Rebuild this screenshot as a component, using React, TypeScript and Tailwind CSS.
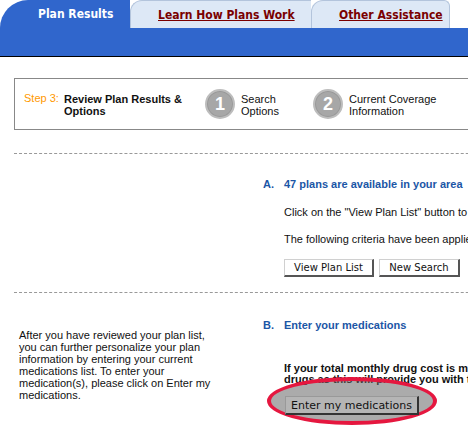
import React from "react";

const tabFont = "font-['DejaVu_Sans_Condensed','DejaVu_Sans',sans-serif] font-bold text-[12px]";
const btnFont = "font-['DejaVu_Sans',sans-serif] text-[10px]";

const StepCircle = ({ n }: { n: string }) => (
  <div className="w-[30px] h-[30px] rounded-full bg-[#a7a7a7] border-2 border-[#bdbdbd] shadow-[inset_0_0_0_1px_#999] flex items-center justify-center text-white font-bold text-[18px] leading-none">
    {n}
  </div>
);

const MacButton = ({ label, className = "" }: { label: string; className?: string }) => (
  <button
    className={`h-[18px] px-[8px] border-t border-l border-[#d0d0d0] border-r-2 border-b-2 border-r-[#555] border-b-[#555] text-[#111] leading-none ${btnFont} ${className}`}
  >
    {label}
  </button>
);

const App = () => {
  return (
    <div className="relative w-[468px] h-[428px] overflow-hidden bg-white text-[#111] text-[11px] font-['Liberation_Sans',Arial,sans-serif]">
      {/* Tabs */}
      <div className="flex h-[28px] items-end">
        <div className={`w-[130px] h-[28px] bg-[#3066cc] rounded-tl-[30px] text-white flex items-center pl-[38px] ${tabFont}`}>
          Plan Results
        </div>
        <div className={`w-[181px] h-[28px] bg-[#dde8f6] border-l border-t border-[#b3c4dc] rounded-tl-[12px] flex items-center pl-[27px] ${tabFont}`}>
          <a className="text-[#7a0000] underline">Learn How Plans Work</a>
        </div>
        <div className={`w-[139px] h-[28px] bg-[#dde8f6] border-l border-t border-r border-[#b3c4dc] rounded-tl-[12px] rounded-tr-[6px] flex items-center pl-[27px] ${tabFont}`}>
          <a className="text-[#7a0000] underline">Other Assistance</a>
        </div>
      </div>
      <div className="h-[29px] bg-[#3066cc] border-b border-black" />

      {/* Step box */}
      <div className="ml-[14px] mt-[21px] w-[520px] h-[52px] border border-[#888] flex items-start pl-[9px]">
        <span className="text-[#ff9900] mt-[11px] w-[40px] shrink-0">Step 3:</span>
        <div className="font-bold leading-[12px] mt-[14px] w-[141px] shrink-0">
          Review Plan Results &amp;
          <br />
          Options
        </div>
        <div className="mt-[10px] shrink-0">
          <StepCircle n="1" />
        </div>
        <div className="leading-[12px] mt-[14px] ml-[6px] w-[72px] shrink-0">
          Search
          <br />
          Options
        </div>
        <div className="mt-[10px] shrink-0">
          <StepCircle n="2" />
        </div>
        <div className="leading-[12px] mt-[14px] ml-[6px]">
          Current Coverage
          <br />
          Information
        </div>
      </div>

      {/* Section A */}
      <div className="ml-[14px] mt-[23px] w-[520px] border-t border-dashed border-[#999]" />
      <div className="flex ml-[14px] w-[700px]">
        <div className="w-[249px] shrink-0" />
        <div className="w-[420px] shrink-0 pt-[24px] whitespace-nowrap">
          <div className="flex font-bold text-[#1b56a6] leading-[13px]">
            <span className="w-[21px]">A.</span>
            <span>47 plans are available in your area</span>
          </div>
          <div className="pl-[21px]">
            <p className="mt-[15px] leading-[13px]">Click on the "View Plan List" button to view the plans available in your area.</p>
            <p className="mt-[14px] leading-[13px]">The following criteria have been applied to your plan search:</p>
            <div className="flex gap-[5px] mt-[13px]">
              <MacButton label="View Plan List" className="w-[90px]" />
              <MacButton label="New Search" className="w-[81px]" />
            </div>
          </div>
        </div>
      </div>

      {/* Section B */}
      <div className="ml-[14px] mt-[15px] w-[520px] border-t border-dashed border-[#999]" />
      <div className="flex ml-[14px] w-[700px]">
        <div className="w-[249px] shrink-0 pl-[5px] pt-[36px] leading-[12px] whitespace-nowrap">
          After you have reviewed your plan list,
          <br />
          you can further personalize your plan
          <br />
          information by entering your current
          <br />
          medications list. To enter your
          <br />
          medication(s), please click on Enter my
          <br />
          medications.
        </div>
        <div className="w-[420px] shrink-0 pt-[26px] whitespace-nowrap">
          <div className="flex font-bold text-[#1b56a6] leading-[13px]">
            <span className="w-[21px]">B.</span>
            <span>Enter your medications</span>
          </div>
          <p className="pl-[21px] mt-[31px] font-bold leading-[11px]">
            If your total monthly drug cost is more than $100, please enter your
            <br />
            drugs as this will provide you with the most accurate estimate.
          </p>
        </div>
      </div>

      {/* Highlight annotation */}
      <div className="absolute left-[267px] top-[377px] w-[170px] h-[48px] rounded-[50%] border-[4px] border-[#e5173f] bg-[rgba(102,102,102,0.55)] flex items-start pt-[15px] pl-[14px]">
        <button
          className={`h-[19px] w-[134px] bg-[#b5b5b5] border-t border-l border-[#999] border-r-2 border-b-2 border-r-[#333] border-b-[#333] text-[#111] leading-none ${btnFont} text-[11px]`}
        >
          Enter my medications
        </button>
      </div>
    </div>
  );
};

export default App;
